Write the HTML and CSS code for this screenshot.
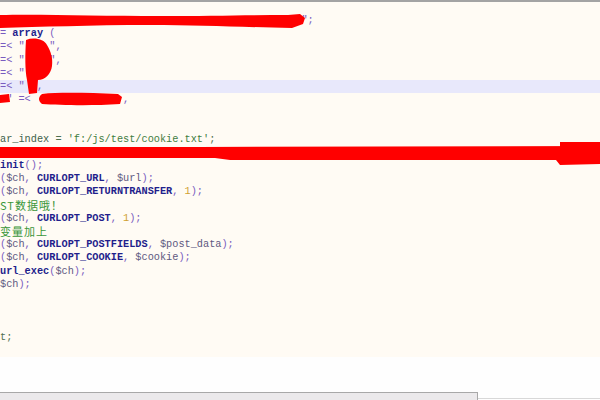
FILE: index.html
```html
<!DOCTYPE html>
<html>
<head>
<meta charset="utf-8">
<link rel="stylesheet" href="styles.css">
</head>
<body>
<div class="editor">
  <div class="code">
    <div class="ln">                                                 <span class="p">";</span></div>
    <div class="ln"><span class="p">=</span> <span class="k">array</span> <span class="p">(</span></div>
    <div class="ln"><span class="p">=&lt;</span> <span class="s">"    "</span><span class="p">,</span></div>
    <div class="ln"><span class="p">=&lt;</span> <span class="s">"    "</span><span class="p">,</span></div>
    <div class="ln"><span class="p">=&lt;</span> <span class="s">"</span></div>
    <div class="ln hl"><span class="p">=&lt;</span> <span class="s">" "</span><span class="p">,</span></div>
    <div class="ln"><span class="s"> "</span> <span class="p">=&lt;</span>               <span class="p">,</span></div>
    <div class="ln"> </div>
    <div class="ln"> </div>
    <div class="ln"><span class="v">ar_index</span> <span class="g">=</span> <span class="str">'f:/js/test/cookie.txt'</span><span class="g">;</span></div>
    <div class="ln"> </div>
    <div class="ln"><span class="k">init</span><span class="p">();</span></div>
    <div class="ln"><span class="p">(</span><span class="d">$ch</span><span class="p">,</span> <span class="k">CURLOPT_URL</span><span class="p">,</span> <span class="d">$url</span><span class="p">);</span></div>
    <div class="ln"><span class="p">(</span><span class="d">$ch</span><span class="p">,</span> <span class="k">CURLOPT_RETURNTRANSFER</span><span class="p">,</span> <span class="n">1</span><span class="p">);</span></div>
    <div class="ln cl">ST数据哦！</div>
    <div class="ln"><span class="p">(</span><span class="d">$ch</span><span class="p">,</span> <span class="k">CURLOPT_POST</span><span class="p">,</span> <span class="n">1</span><span class="p">);</span></div>
    <div class="ln cl">变量加上</div>
    <div class="ln"><span class="p">(</span><span class="d">$ch</span><span class="p">,</span> <span class="k">CURLOPT_POSTFIELDS</span><span class="p">,</span> <span class="d">$post_data</span><span class="p">);</span></div>
    <div class="ln"><span class="p">(</span><span class="d">$ch</span><span class="p">,</span> <span class="k">CURLOPT_COOKIE</span><span class="p">,</span> <span class="d">$cookie</span><span class="p">);</span></div>
    <div class="ln"><span class="k">url_exec</span><span class="p">(</span><span class="d">$ch</span><span class="p">);</span></div>
    <div class="ln"><span class="d">$ch</span><span class="p">);</span></div>
    <div class="ln"> </div>
    <div class="ln"> </div>
    <div class="ln"> </div>
    <div class="ln"><span class="g">t;</span></div>
  </div>
  <svg class="marks" width="600" height="355" viewBox="0 2 600 355">
    <path d="M0 15 C40 14 100 16 160 16 C210 16 250 15 288 15 L300 14 L305 18 L303 24 L292 28 C240 27 200 25 150 25 C90 25 40 27 0 28 Z" fill="#ff0000"/>
    <path d="M26 40 C34 37 44 39 47 45 C51 52 53 58 52 66 C51 74 45 80 38 80 L37 93 L29 94 L27 80 C25 70 25 55 26 40 Z" fill="#ff0000"/>
    <path d="M0 95 L9 94 L10 102 L0 103 Z" fill="#ff0000"/>
    <path d="M42 94 C60 92 90 93 118 94 L122 97 L120 104 C90 106 60 105 42 104 C38 101 38 97 42 94 Z" fill="#ff0000"/>
    <path d="M0 147 L200 147 L600 146 L600 164 L560 165 L556 160 L230 160 L215 158 L0 158 Z" fill="#ff0000"/>
    <path d="M560 142 L600 142 L600 150 L560 150 Z" fill="#ff0000"/>
  </svg>
</div>
<div class="gap"></div>
<div class="footer">
  <div class="panel"></div>
  <div class="rest"></div>
</div>
</body>
</html>
```
FILE: styles.css
```css
html, body {
  margin: 0;
  padding: 0;
  background: #fefefe;
  width: 600px;
  height: 400px;
  overflow: hidden;
}
.editor {
  position: relative;
  height: 355px;
  border-top: 2px solid #a3a3a3;
  background: #fffbf4;
}
.code {
  padding-top: 12px;
  font-family: "Liberation Mono", "Noto Sans CJK SC", monospace;
  font-size: 10.25px;
  color: #454545;
}
.ln {
  height: 13.2px;
  line-height: 13.2px;
  white-space: pre;
}
.hl {
  background: #e8e8fb;
}
.p { color: #7a5cc0; }
.k { color: #1f1f8c; font-weight: bold; }
.s { color: #7a5cc0; }
.d { color: #5e5880; }
.n { color: #d0a030; }
.v { color: #40624a; }
.g { color: #4f6f4f; }
.str { color: #3f7d42; }
.cl {
  color: #3a963a;
  font-family: "Noto Sans CJK SC", sans-serif;
  font-size: 11px;
  letter-spacing: 1px;
}
.marks {
  position: absolute;
  left: 0;
  top: 0;
}
.gap {
  height: 35px;
}
.footer {
  display: flex;
  height: 8px;
}
.panel {
  width: 477px;
  border-top: 1px solid #a8a8a8;
  border-right: 1px solid #a8a8a8;
  background: #ebe9eb;
}
.rest {
  flex: 1;
  margin-top: 6px;
  border-top: 1px solid #d8d8d8;
}
```
